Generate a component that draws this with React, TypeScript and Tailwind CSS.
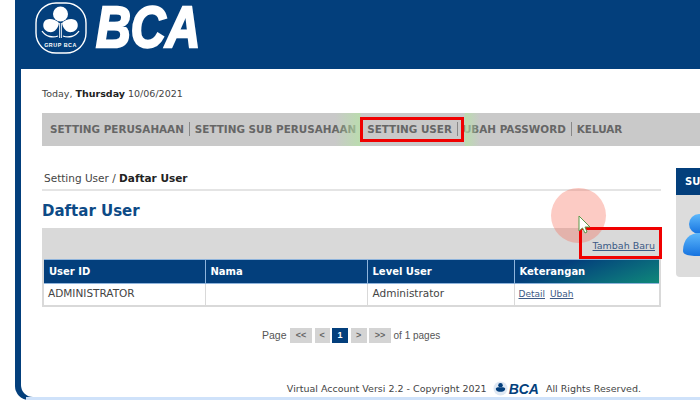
import { ReactNode } from "react";

const NAVY = "bg-[#033f7c]";

const menuItems = ["SETTING PERUSAHAAN", "SETTING SUB PERUSAHAAN", "SETTING USER", "UBAH PASSWORD", "KELUAR"];
const columns = [
  { label: "User ID", width: "w-[162px]" },
  { label: "Nama", width: "w-[162px]" },
  { label: "Level User", width: "w-[147px]" },
  { label: "Keterangan", width: "" },
];

const GroupLogo = () => (
  <svg viewBox="0 0 52 52" className="h-[52px] w-[52px] shrink-0" fill="none">
    <rect x="1" y="1" width="50" height="50" rx="20" stroke="white" strokeWidth="1.4" />
    <circle cx="25.5" cy="12" r="7.5" fill="white" />
    <path d="M24 21 C20 17 12 15 9 20 C7 24 9 29 14 30 C19 31 23 27 24 21Z" fill="white" />
    <path d="M27 21 C31 17 39 15 42 20 C44 24 42 29 37 30 C32 31 28 27 27 21Z" fill="white" />
    <path d="M7 29 C11 35 18 36 23 34 M44 29 C40 35 33 36 28 34" stroke="white" strokeWidth="1.3" />
    <path d="M24.6 21 L24.6 36 M26.4 21 L26.4 36" stroke="white" strokeWidth="0.9" />
    <text x="25.5" y="45" textAnchor="middle" fontSize="5.4" fontWeight="700" fill="white" fontFamily="Liberation Sans, sans-serif" letterSpacing="0.5">
      GRUP BCA
    </text>
  </svg>
);

const SmallLogo = () => (
  <svg viewBox="0 0 16 16" className="h-[15px] w-[15px]">
    <circle cx="8" cy="8" r="7.5" fill="#dfe8f3" />
    <circle cx="8" cy="4.5" r="2.4" fill="#033f7c" />
    <path d="M3 8 C5 6 7 7 8 7 C9 7 11 6 13 8 C13 11 10 11.5 8 11.5 C6 11.5 3 11 3 8Z" fill="#033f7c" />
  </svg>
);

const UserIcon = () => (
  <svg viewBox="0 0 40 44" className="h-[44px] w-[40px] shrink-0">
    <defs>
      <linearGradient id="u" x1="0" y1="0" x2="0" y2="1">
        <stop offset="0" stopColor="#5db8fb" />
        <stop offset="1" stopColor="#1673e0" />
      </linearGradient>
    </defs>
    <circle cx="17" cy="11" r="10" fill="url(#u)" />
    <path d="M1 38 C1 26 8 20 17 20 C27 20 34 26 34 38 C34 42 28 43 17 43 C7 43 1 42 1 38Z" fill="url(#u)" />
  </svg>
);

const PageButton = ({ children, width, active }: { children: ReactNode; width: string; active?: boolean }) => (
  <span
    className={
      `flex h-[15px] ${width} items-center justify-center text-[9px] font-bold ` +
      (active ? "bg-[#033f7c] text-white" : "bg-[#d4d4d4] text-[#666]")
    }
  >
    {children}
  </span>
);

export default function App() {
  return (
    <div className="relative h-[400px] w-[700px] overflow-hidden bg-white pl-[15px] font-['DejaVu_Sans',sans-serif] text-[#444]">
      <div className={`flex h-full flex-col rounded-bl-[14px] ${NAVY}`}>
        {/* Header */}
        <div className="flex h-[69px] shrink-0 items-start pl-[20px] pt-[2px]">
          <GroupLogo />
          <span className="ml-[9px] mt-[3px] origin-left scale-x-[0.83] font-['Liberation_Sans',sans-serif] text-[58px] font-bold italic leading-[44px] text-white [-webkit-text-stroke:2.5px_white]">
            BCA
          </span>
        </div>

        <div className="mb-[3px] ml-[6px] flex min-h-0 flex-1 flex-col rounded-bl-[12px] bg-white pl-[21px]">
          <p className="mt-[19px] h-[12px] text-[9.5px] leading-[12px] text-[#444]">
            Today, <b className="text-[#222]">Thursday</b> 10/06/2021
          </p>

          {/* Menu */}
          <nav className="mt-[13px] flex h-[33px] shrink-0 items-center bg-[#c9c9c9] pl-[8px] text-[10.4px] font-bold text-[#666]">
            {menuItems.map((item, i) => (
              <span key={item} className="flex items-center">
                {i > 0 && <span className="mx-[5px] h-[14px] w-px bg-[#888]" />}
                <span>{item}</span>
              </span>
            ))}
          </nav>

          <div className="flex min-h-0 flex-1 items-start">
            {/* Main column */}
            <div className="w-[619px] shrink-0">
              <div className="mt-[25px] h-[20px] border-b-2 border-[#e4e4e4] pl-[2px] text-[10.5px] leading-[14px] text-[#444]">
                Setting User / <b className="text-[#222]">Daftar User</b>
              </div>
              <h1 className="mt-[10px] h-[20px] text-[15px] font-bold leading-[20px] text-[#0d4a86]">Daftar User</h1>

              <div className="mt-[7px] flex h-[31px] items-end justify-end bg-[#d9d9d9] pb-[7px] pr-[6px] text-[9.5px] leading-[12px]">
                <a className="text-[#3c5a86] underline">Tambah Baru</a>
              </div>

              <table className="w-full table-fixed border-collapse border-x-2 border-b-2 border-[#d9d9d9] text-[10px]">
                <thead>
                  <tr className="h-[24px] bg-[linear-gradient(160deg,#033f7c_78%,#0b6f7c_92%,#0f8a78)]">
                    {columns.map((col) => (
                      <th
                        key={col.label}
                        className={`${col.width} border-x border-y border-[#8fb4dc] pl-[5px] text-left font-bold text-white`}
                      >
                        {col.label}
                      </th>
                    ))}
                  </tr>
                </thead>
                <tbody>
                  <tr className="h-[22px] text-[10.5px]">
                    <td className="border-r border-[#d9d9d9] pl-[4px]">ADMINISTRATOR</td>
                    <td className="border-r border-[#d9d9d9]" />
                    <td className="border-r border-[#d9d9d9] pl-[5px]">Administrator</td>
                    <td className="pl-[4px] text-[9px] text-[#3c5a86]">
                      <a className="underline">Detail</a> <a className="ml-[2px] underline">Ubah</a>
                    </td>
                  </tr>
                </tbody>
              </table>

              <div className="mt-[21px] flex items-center gap-[2.5px] pl-[220px] font-['Liberation_Sans',sans-serif] text-[10.5px] text-[#555]">
                <span className="mr-[1px]">Page</span>
                <PageButton width="w-[22px]">&lt;&lt;</PageButton>
                <PageButton width="w-[15px]">&lt;</PageButton>
                <PageButton width="w-[16px]" active>1</PageButton>
                <PageButton width="w-[16px]">&gt;</PageButton>
                <PageButton width="w-[22px]">&gt;&gt;</PageButton>
                <span className="text-[10px]">of 1 pages</span>
              </div>

              <div className="mt-[38px] flex items-center justify-end gap-[1px] pr-[20px] text-[9.5px] text-[#444]">
                <span>Virtual Account Versi 2.2 - Copyright 2021</span>
                <span className="ml-[5px]"><SmallLogo /></span>
                <span className="font-['Liberation_Sans',sans-serif] text-[14px] font-bold italic leading-[14px] text-[#033f7c]">BCA</span>
                <span className="ml-[6px]">All Rights Reserved.</span>
              </div>
            </div>

            {/* Side panel */}
            <aside className="ml-[15px] mt-[22px] h-[109px] w-[120px] shrink-0 overflow-hidden rounded-b-[4px] bg-[#dcdcdc]">
              <div className={`flex h-[27px] items-center pl-[9px] text-[10px] font-bold text-white ${NAVY}`}>SU</div>
              <div className="pl-[6px] pt-[18px]"><UserIcon /></div>
            </aside>
          </div>
        </div>
        <div className="absolute bottom-0 left-[26px] right-0 h-[3px] bg-[#cfe2fa]" />
      </div>

      {/* Video annotations */}
      <div className="absolute left-[335px] top-[113px] h-[33px] w-[145px] bg-[linear-gradient(90deg,transparent,#b7e0a8cc_17%,transparent_18%,transparent_89%,#b7e0a8cc_90%,transparent)]" />
      <div className="absolute left-[360px] top-[117px] h-[25px] w-[104px] border-[3px] border-[#f00000]" />
      <div className="absolute left-[551px] top-[188px] h-[55px] w-[55px] rounded-full bg-[#f56a55]/35" />
      <div className="absolute left-[579px] top-[227px] h-[32px] w-[83px] border-[3px] border-[#f00000]" />
      <svg viewBox="0 0 14 20" className="absolute left-[578px] top-[215px] h-[20px] w-[14px]">
        <path d="M1 1 L1 16 L4.5 13 L7 18 L9 17 L7 12 L12 12 Z" fill="white" stroke="#5a9a4a" strokeWidth="1" />
      </svg>
    </div>
  );
}
